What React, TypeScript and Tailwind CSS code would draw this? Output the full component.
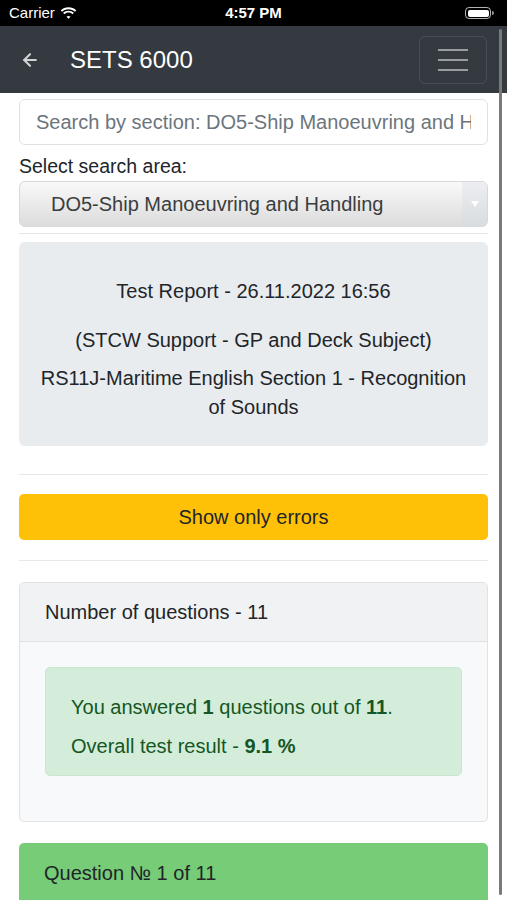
import { ArrowLeft } from 'lucide-react';

function StatusBar() {
  return (
    <div className="relative flex h-[26px] items-center bg-black px-[9px] text-[15px] text-white">
      <div className="flex items-center gap-[5px]">
        <span>Carrier</span>
        <svg width="17" height="12" viewBox="0 0 17 12" fill="white">
          <path d="M8.5 2.2c2.5 0 4.8 1 6.5 2.6l1.3-1.4C14.2 1.4 11.5.2 8.5.2S2.8 1.4.7 3.4L2 4.8C3.7 3.2 6 2.2 8.5 2.2z" />
          <path d="M8.5 5.6c1.6 0 3 .6 4.1 1.6l1.3-1.4C12.5 4.5 10.6 3.7 8.5 3.7S4.5 4.5 3.1 5.8l1.3 1.4c1.1-1 2.5-1.6 4.1-1.6z" />
          <path d="M8.5 8.9c.8 0 1.5.3 2 .8L8.5 11.8 6.5 9.7c.5-.5 1.2-.8 2-.8z" />
        </svg>
      </div>
      <span className="absolute left-1/2 -translate-x-1/2 font-semibold">4:57 PM</span>
      <div className="ml-auto mr-[4px] flex items-center">
        <div className="flex h-[12px] w-[26px] items-center rounded-[4px] border border-white/70 p-[1.5px]">
          <div className="h-full w-full rounded-[2px] bg-white" />
        </div>
        <div className="ml-[1px] h-[4px] w-[2px] rounded-r bg-white/60" />
      </div>
    </div>
  );
}

function NavBar() {
  return (
    <div className="flex h-[67px] items-center bg-[#343a40] pl-[20px] pr-[20px]">
      <ArrowLeft size={20} strokeWidth={2.5} className="text-[#d0d2d4]" />
      <span className="ml-[30px] text-[24px] text-white">SETS 6000</span>
      <button className="ml-auto flex h-[48px] w-[68px] flex-col items-center justify-center gap-[8px] rounded-[6px] border border-white/10">
        <span className="block h-[2px] w-[30px] bg-[#9a9da0]" />
        <span className="block h-[2px] w-[30px] bg-[#9a9da0]" />
        <span className="block h-[2px] w-[30px] bg-[#9a9da0]" />
      </button>
    </div>
  );
}

export default function App() {
  return (
    <div
      className="relative h-[900px] w-[507px] overflow-hidden bg-white text-[#212529]"
      style={{ fontFamily: '"Liberation Sans", Arial, sans-serif' }}
    >
      <StatusBar />
      <NavBar />

      <div className="px-[19px] pt-[6px]">
        <input
          type="text"
          readOnly
          placeholder="Search by section: DO5-Ship Manoeuvring and Handling"
          className="block h-[46px] w-full rounded-[6px] border border-[#dee2e6] px-[16px] text-[20px] text-[#212529] outline-none placeholder:text-[#6c757d]"
        />

        <div className="mt-[10px] text-[19.5px] leading-[23px]">Select search area:</div>

        <div className="mt-[3px] flex h-[46px] overflow-hidden rounded-[6px] border border-[#d6d8da] bg-gradient-to-b from-[#f9f9f9] to-[#dcdcdc]">
          <div className="flex flex-1 items-center pl-[31px] text-[20px] text-[#3a3d40]">
            DO5-Ship Manoeuvring and Handling
          </div>
          <div className="flex w-[25px] items-center justify-center bg-gradient-to-b from-[#eceef1] to-[#d9dce0]">
            <svg width="8" height="6" viewBox="0 0 8 6">
              <path d="M0 0h8L4 6z" fill="#ffffff" />
            </svg>
          </div>
        </div>

        <div className="mt-[6px] h-px bg-[#e8e8e8]" />

        <div className="mt-[8px] h-[204px] rounded-[6px] bg-[#e9ecef] px-[20px] pt-[37px] text-center text-[20px]">
          <p className="leading-[24px]">Test Report - 26.11.2022 16:56</p>
          <p className="mt-[25px] leading-[24px]">(STCW Support - GP and Deck Subject)</p>
          <p className="mt-[12px] leading-[29px]">
            RS11J-Maritime English Section 1 - Recognition of Sounds
          </p>
        </div>

        <div className="mt-[28px] h-px bg-[#e8e8e8]" />

        <button className="mt-[19px] flex h-[46px] w-full items-center justify-center rounded-[5px] bg-[#ffc107] text-[20px] text-[#212529]">
          Show only errors
        </button>

        <div className="mt-[20px] h-px bg-[#e8e8e8]" />

        <div className="mt-[21px] overflow-hidden rounded-[5px] border border-[#e0e2e4] bg-[#f8f9fa]">
          <div className="flex h-[59px] items-center border-b border-[#dfe1e3] bg-[#f1f2f3] px-[25px] text-[20px]">
            Number of questions - 11
          </div>
          <div className="px-[25px] pb-[45px] pt-[25px]">
            <div className="h-[109px] rounded-[5px] border border-[#cae6d1] bg-[#d4edda] px-[25px] pt-[27px] text-[20px] text-[#155724]">
              <p className="leading-[24px]">
                You answered <b>1</b> questions out of <b>11</b>.
              </p>
              <p className="mt-[15px] leading-[24px]">
                Overall test result - <b>9.1 %</b>
              </p>
            </div>
          </div>
        </div>

        <div className="mt-[21px] h-[80px] rounded-t-[5px] bg-[#77cc77] px-[25px] pt-[18px] text-[20px] leading-[24px]">
          Question № 1 of 11
        </div>
      </div>

      <div className="absolute right-[5px] top-[29px] h-[866px] w-[3px] rounded-full bg-[#7a7a7a]" />
    </div>
  );
}
